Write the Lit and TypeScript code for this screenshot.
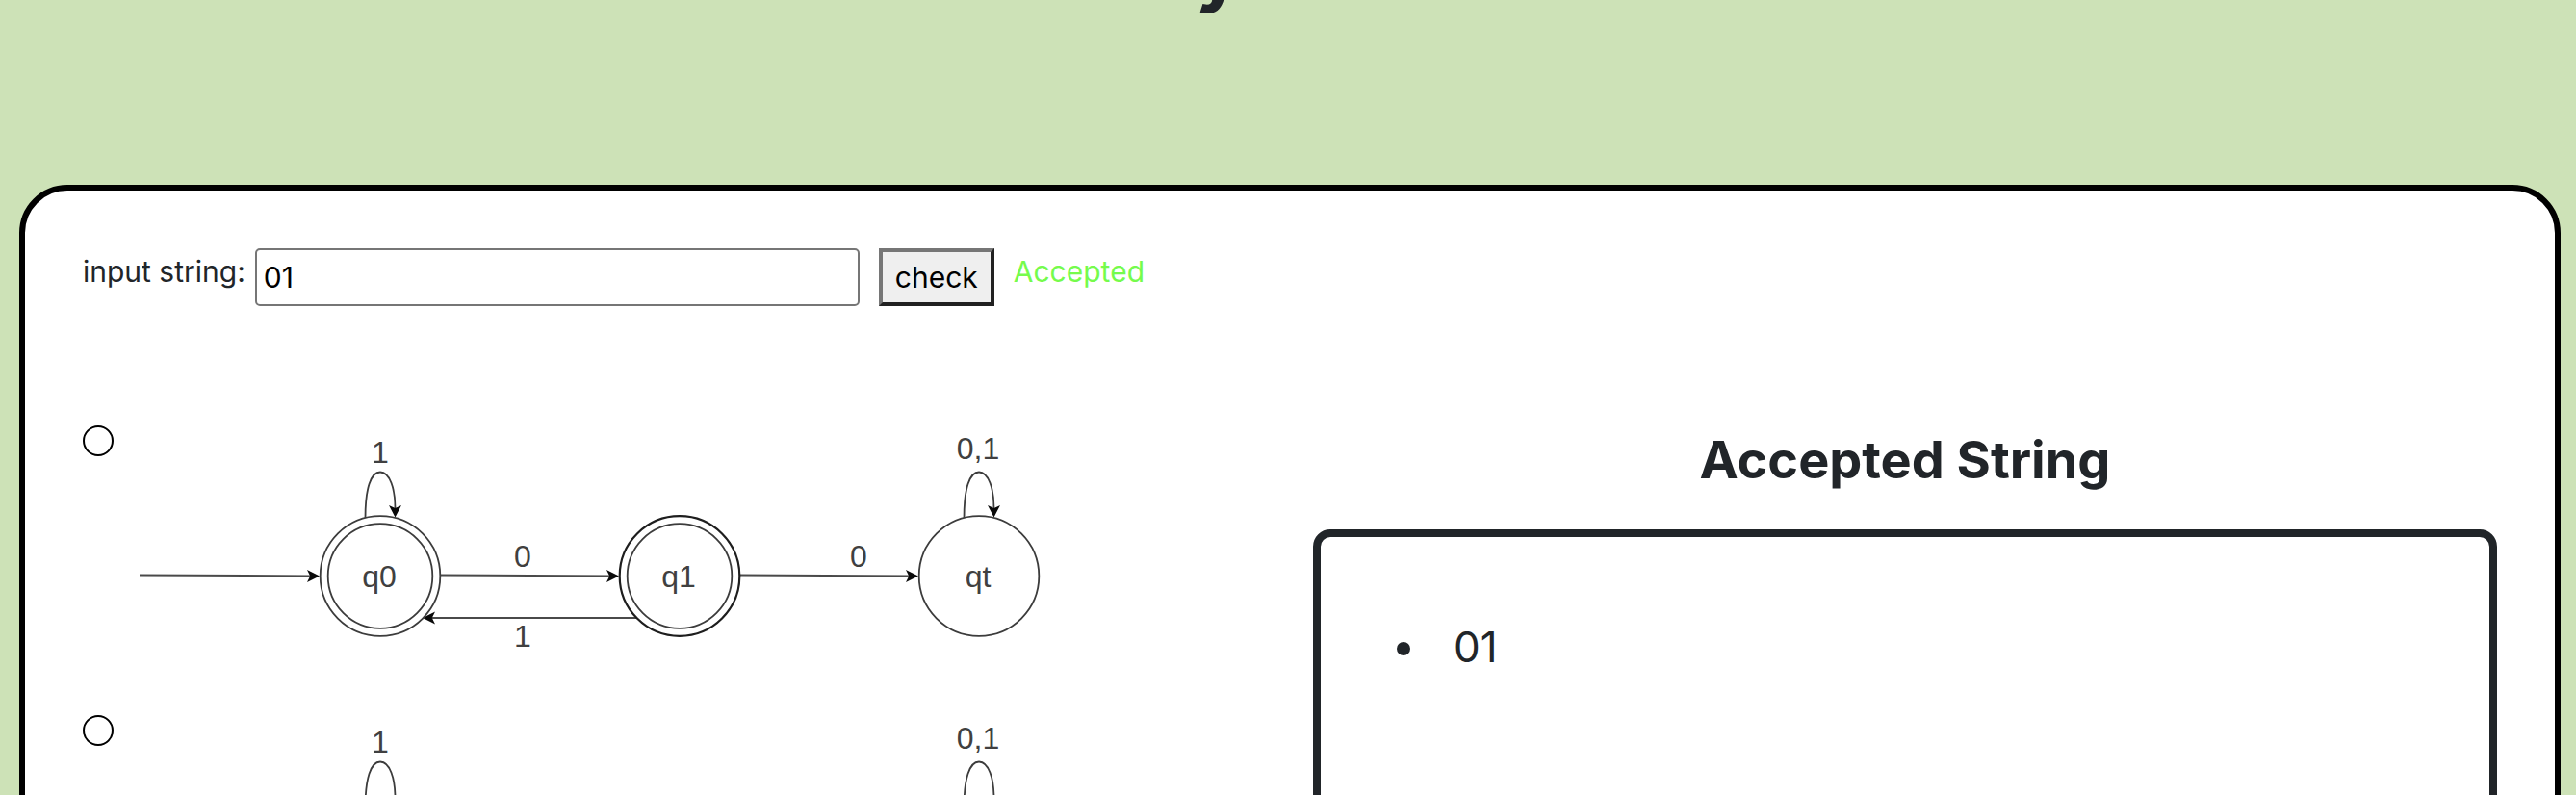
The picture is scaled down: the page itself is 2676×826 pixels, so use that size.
import { LitElement, html, css, svg } from "lit";
import { customElement, property, state } from "lit/decorators.js";

/** State diagram: three states, the first two accepting. */
@customElement("state-diagram")
class StateDiagram extends LitElement {
  static styles = css`
    :host {
      display: block;
    }
    .diagram {
      display: block;
      width: 940px;
      max-width: 100%;
      height: auto;
    }
    .line {
      fill: none;
      stroke: #3c3c3c;
      stroke-width: 1.8;
    }
    .strong {
      stroke: #1e1e1e;
      stroke-width: 2.2;
    }
    .edge {
      fill: none;
      stroke: #4a4a4a;
      stroke-width: 2;
    }
    .head {
      fill: #0a0a0a;
    }
    .text {
      font: 32px "Liberation Sans", Arial, sans-serif;
      fill: #404040;
      text-anchor: middle;
    }
  `;

  render() {
    const arrowRight = (x: number, y: number) =>
      svg`<path class="head" d="M${x} ${y}l-13 -6.5l3.2 6.5l-3.2 6.5z"></path>`;
    const arrowDown = (x: number, y: number) =>
      svg`<path class="head" d="M${x} ${y}l-6.5 -12.5l6.5 3l6.5 -3z"></path>`;
    const loop = (x: number) => svg`
      <path class="line" d="M${x - 15.5} 96C${x - 15.5} 66 ${x - 10} 48.5 ${x} 48.5S${x + 15.5} 66 ${x + 15.5} 86"></path>
      ${arrowDown(x + 15.5, 95.5)}`;
    return html`
      <svg class="diagram" viewBox="0 0 940 261" role="img" aria-label="q0, q1, qt">
        <path class="edge" d="M3 155.5L182 156.5M315 155.5L494 156.5M627 155.5L804 156.5M519 200H307"></path>
        ${arrowRight(190, 156.5)} ${arrowRight(501, 156.5)} ${arrowRight(812, 156.5)}
        <path class="head" d="M297 200l13 -6.5l-3.2 6.5l3.2 6.5z"></path>
        <circle class="line" cx="253" cy="156.5" r="62.3"></circle>
        <circle class="line" cx="253" cy="156.5" r="54.3"></circle>
        <circle class="line strong" cx="564" cy="156.5" r="62.3"></circle>
        <circle class="line" cx="564" cy="156.5" r="54.3"></circle>
        <circle class="line" cx="875" cy="156.5" r="62.3"></circle>
        ${loop(253)} ${loop(875)}
        <text class="text" x="253" y="39">1</text>
        <text class="text" x="874" y="35">0,1</text>
        <text class="text" x="252" y="168">q0</text>
        <text class="text" x="563" y="168">q1</text>
        <text class="text" x="874" y="168">qt</text>
        <text class="text" x="401" y="147">0</text>
        <text class="text" x="401" y="230">1</text>
        <text class="text" x="750" y="147">0</text>
      </svg>
    `;
  }
}

@customElement("app-root")
class AppRoot extends LitElement {
  @property() value = "01";
  @state() accepted: string[] = ["01"];
  @state() verdict = "Accepted";

  static styles = css`
    :host {
      display: block;
      box-sizing: border-box;
      height: 100vh;
      overflow: hidden;
      background: #cde2b7;
      color: #212529;
      font-family: Inter, "Liberation Sans", sans-serif;
      font-size: 30px;
      line-height: 48px;
    }
    *,
    *::before {
      box-sizing: border-box;
    }
    .title {
      margin: -80px 0 0;
      padding-right: 144px;
      font-size: 80px;
      line-height: 96px;
      font-weight: 700;
      text-align: center;
    }
    .card {
      margin: 176px 16px 0 20px;
      padding: 60px;
      min-height: 100vh;
      background: #fff;
      border: 6px solid #000;
      border-radius: 50px;
    }
    .form {
      display: flex;
      align-items: flex-start;
    }
    .field {
      width: 628px;
      height: 60px;
      margin: 0 20px 0 10px;
      padding: 0 7px;
      border: 2px solid #767676;
      border-radius: 5px;
      font: inherit;
      color: #000;
      background: #fff;
    }
    .check {
      height: 60px;
      margin-right: 20px;
      padding: 0 13px;
      border: 4px solid;
      border-color: #767676 #212121 #212121 #767676;
      background: #efefef;
      color: #000;
      font: inherit;
    }
    .verdict {
      color: #75fb4c;
    }
    .columns {
      display: grid;
      grid-template-columns: 1fr 1fr;
      gap: 48px;
      margin-top: 124px;
    }
    .machines {
      display: flex;
      flex-direction: column;
      gap: 40px;
    }
    .machine {
      display: flex;
      align-items: flex-start;
      gap: 24px;
    }
    .radio {
      appearance: none;
      flex: none;
      width: 32px;
      height: 32px;
      margin: 0;
      border: 2px solid #000;
      border-radius: 50%;
      background: #fff;
    }
    .radio:checked {
      box-shadow: inset 0 0 0 5px #fff;
      background: #000;
    }
    .results {
      display: flex;
      flex-direction: column;
    }
    .heading {
      margin: 0 0 36px;
      font-size: 54px;
      line-height: 72px;
      font-weight: 700;
      text-align: center;
    }
    .box {
      flex: 1;
      border: 8px solid #212529;
      border-radius: 18px;
      padding: 80px 58px;
    }
    .list {
      margin: 0;
      padding-left: 56px;
      font-size: 44px;
      line-height: 68px;
    }
    .item {
      padding-left: 24px;
    }
  `;

  private check(e: Event) {
    e.preventDefault();
    const ok = /^[01]*$/.test(this.value) && !this.value.includes("00");
    this.verdict = ok ? "Accepted" : "Rejected";
    if (ok && !this.accepted.includes(this.value)) {
      this.accepted = [...this.accepted, this.value];
    }
  }

  render() {
    return html`
      <h1 class="title">y</h1>
      <main class="card">
        <form class="form" @submit=${this.check}>
          <label for="string">input string:</label>
          <input
            id="string"
            class="field"
            type="text"
            .value=${this.value}
            @input=${(e: Event) => (this.value = (e.target as HTMLInputElement).value)}
          />
          <button class="check" type="submit">check</button>
          <output class="verdict" for="string">${this.verdict}</output>
        </form>
        <div class="columns">
          <div class="machines">
            ${[1, 2].map(
              (n) => html`
                <label class="machine">
                  <input class="radio" type="radio" name="machine" value=${n} />
                  <state-diagram></state-diagram>
                </label>
              `
            )}
          </div>
          <section class="results">
            <h2 class="heading">Accepted String</h2>
            <div class="box">
              <ul class="list">
                ${this.accepted.map((s) => html`<li class="item">${s}</li>`)}
              </ul>
            </div>
          </section>
        </div>
      </main>
    `;
  }
}
